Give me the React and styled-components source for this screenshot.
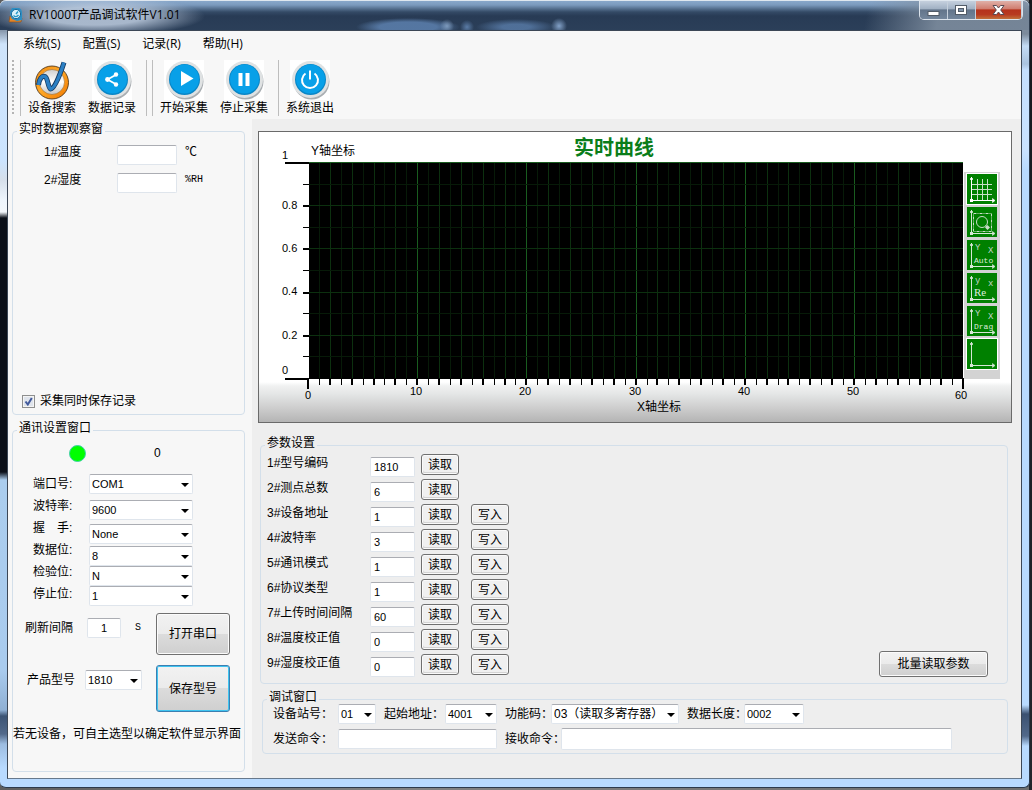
import React from 'react';
import styled, { createGlobalStyle, css } from 'styled-components';

const GlobalStyle = createGlobalStyle`
  *, *::before, *::after { box-sizing: border-box; }
  body {
    margin: 0;
    background: linear-gradient(90deg, #5e5e5e 0%, #828282 40%, #6e6e6e 100%);
    font: 12px/14px "Liberation Sans", "Noto Sans CJK SC", sans-serif;
    color: #000;
  }
  button, input, select { font: inherit; color: inherit; margin: 0; }
`;

const uiFont = '"Open Sans", "Noto Sans CJK SC", sans-serif';

/* ---------- window frame ---------- */

const Desktop = styled.div`
  min-height: 100vh;
  display: flex;
  padding: 0 2px 2px 0;
  background: linear-gradient(#15181d, #22262c) right / 3px 100% no-repeat;
`;

const Window = styled.div`
  flex: 1;
  min-width: 0;
  display: flex;
  flex-direction: column;
  border: solid #2c3a4c;
  border-width: 0 1px 1px 0;
  border-radius: 6px;
  background:
    linear-gradient(
      #76869a 0, #8494a8 30px, #cfe4fb 44px, #cbe4ff 160px, #d6dfea 180px, #eef5fc 200px,
      #f3f7fb 212px, #0b0f18 218px, #0b0f18 472px, #abcdee 480px, #a9cbee 670px,
      #8fb0d4 710px, #3c5474 716px, #52698a 734px, #9cbce0 744px, #b8daff 768px
    ) left / 8px 100% no-repeat,
    linear-gradient(
      #8b98a8 0, #7c8a9b 34px, #c4dcf6 46px, #a9c3e0 64px, #c4dfff 70px, #c9e2ff 150px,
      #b8daff 170px, #b8daff 705px, #3b5171 714px, #52698a 736px, #b8daff 746px
    ) right / 10px 100% no-repeat,
    #b8daff;
`;

const TitleBar = styled.header`
  height: 30px;
  display: flex;
  align-items: flex-start;
  padding-left: 8px;
  border-top: 1px solid #dfe7ef;
  border-radius: 6px 6px 0 0;
  background:
    radial-gradient(ellipse 110px 20px at 95px 15px, rgba(190, 205, 224, 0.85) 45%, rgba(150, 172, 200, 0) 100%),
    radial-gradient(circle 7px at 447px 25px, rgba(150, 180, 215, 0.7), rgba(90, 120, 160, 0)),
    radial-gradient(circle 7px at 467px 26px, rgba(102, 139, 186, 0.8), rgba(90, 120, 160, 0)),
    radial-gradient(circle 8px at 559px 25px, rgba(140, 172, 212, 0.9), rgba(90, 120, 160, 0)),
    radial-gradient(ellipse 52px 9px at 408px 26px, rgba(92, 128, 174, 0.85) 55%, rgba(90, 120, 160, 0) 100%),
    radial-gradient(ellipse 40px 8px at 516px 26px, rgba(92, 128, 174, 0.75) 35%, rgba(90, 120, 160, 0) 100%),
    linear-gradient(100deg, rgba(130, 145, 162, 0) 84%, rgba(130, 145, 162, 0.85) 91%),
    linear-gradient(#88a7ca 0, #7b9abd 4px, #344a66 11px, #283b55 15px, #2b3f59 100%);
`;

const Title = styled.h1`
  flex: 1;
  display: flex;
  align-items: center;
  gap: 5px;
  height: 28px;
  margin: 0;
  font: 12px/16px ${uiFont};
`;

const Caption = styled.div`
  display: flex;
  margin-right: 6px;
  border: 1px solid #dbe3ec;
  border-top: 0;
  border-radius: 0 0 5px 5px;
  overflow: hidden;
`;

const CaptionButton = styled.button`
  width: ${(p) => (p.$close ? 46 : 28)}px;
  height: 18px;
  display: flex;
  justify-content: center;
  align-items: center;
  padding: 0;
  border: 0;
  border-right: 1px solid #c6d0dc;
  background: ${(p) =>
    p.$close
      ? 'linear-gradient(#e0b0a8 0, #cf7a6c 46%, #b5321c 48%, #b83a20 75%, #c1703a 100%)'
      : 'linear-gradient(#c5d0de 0, #9fafc2 46%, #62748a 48%, #73869c 100%)'};
`;

const Client = styled.div`
  flex: 1;
  display: flex;
  flex-direction: column;
  margin: 0 7px 8px 7px;
  border: 1px solid #3c4756;
  border-bottom-color: #66788c;
  background: #f7f7f7;
`;

/* ---------- menu and toolbar ---------- */

const MenuBar = styled.nav`
  display: flex;
  gap: 22px;
  padding: 5px 15px;
  font: 12px/16px ${uiFont};
`;

const MenuLink = styled.a`
  color: #000;
  text-decoration: none;
`;

const ToolBar = styled.div`
  display: flex;
  height: 62px;
  padding: 3px 4px;
`;

const Grip = styled.span`
  width: 2px;
  margin-right: 6px;
  background: repeating-linear-gradient(#b4b4b4 0 2px, transparent 2px 4px);
`;

const Separator = styled.span`
  width: 1px;
  margin-right: ${(p) => p.$after || 1}px;
  margin-left: ${(p) => p.$before || 0}px;
  background: #bdbdbd;
`;

const ToolButton = styled.button`
  width: 60px;
  display: flex;
  flex-direction: column;
  align-items: center;
  padding: 0;
  border: 0;
  background: none;
  font: 12px/16px ${uiFont};
`;

/* ---------- shared form parts ---------- */

const Group = styled.fieldset`
  min-width: 0;
  margin: 0 0 0 ${(p) => p.$indent || 0}px;
  padding: 0;
  display: flex;
  flex-direction: column;
  border: 1px solid #d3dfea;
  border-radius: 4px;
  ${(p) => p.$grow && css`flex: 1;`}
`;

const Legend = styled.legend`
  height: 18px;
  margin-left: 4px;
  padding: 0 2px;
  line-height: 14px;
`;

const Label = styled.label`
  white-space: nowrap;
`;

const TextBox = styled.input`
  width: ${(p) => p.$width}px;
  height: 20px;
  padding: 0 3px;
  border: 1px solid #dfe5ec;
  border-top-color: #abadb3;
  border-radius: 2px;
  background: #fff;
  font-size: 11px;
  text-align: ${(p) => (p.$center ? 'center' : 'left')};
  ${(p) => p.$fill && css`flex: 1; min-width: 0; height: 22px;`}
`;

const SelectWrap = styled.span`
  position: relative;
  display: block;
  width: ${(p) => p.$width}px;
  height: 20px;
  &::after {
    content: '';
    position: absolute;
    right: 4px;
    top: 9px;
    border: 4px solid transparent;
    border-top-color: #000;
    border-bottom: 0;
    pointer-events: none;
  }
`;

const SelectBox = styled.select`
  appearance: none;
  width: 100%;
  height: 100%;
  padding: 0 0 1px 2px;
  border: 1px solid #dfe5ec;
  border-top-color: #abadb3;
  border-radius: 2px;
  background: #fff;
  font-size: ${(p) => (p.$wide ? 12 : 11)}px;
`;

const PushButton = styled.button`
  width: ${(p) => p.$width}px;
  height: ${(p) => p.$height}px;
  padding: 0;
  border: 1px solid ${(p) => (p.$active ? '#3c7fb1' : '#707070')};
  border-radius: 3px;
  background: linear-gradient(#f2f2f2, #ebebeb 49%, #dcdcdc 50%, #cfcfcf);
  box-shadow: inset 0 0 0 1px ${(p) => (p.$active ? '#3fc4f0' : '#fbfbfb')};
`;

const MiniButton = styled.button`
  width: 38px;
  height: 21px;
  padding: 0;
  border: 1px solid #707070;
  border-radius: 3px;
  background: #f0f0f0;
  box-shadow: inset 0 0 0 1px #fafafa, inset 1px -2px 0 #d4d4d4;
  line-height: 16px;
`;

function Select({ id, width, value, label, wide }) {
  return (
    <SelectWrap $width={width}>
      <SelectBox id={id} aria-label={label} defaultValue={value} $wide={wide}>
        <option>{value}</option>
      </SelectBox>
    </SelectWrap>
  );
}

/* ---------- page columns ---------- */

const Body = styled.main`
  flex: 1;
  display: flex;
`;

const Sidebar = styled.aside`
  width: 244px;
  display: flex;
  flex-direction: column;
  gap: 6px;
  padding: 3px 7px 6px 4px;
`;

const Content = styled.div`
  flex: 1;
  min-width: 0;
  padding: 12px 9px 0 6px;
  background: #eee;
`;

/* ---------- sidebar ---------- */

const Readings = styled.div`
  flex: 1;
  display: flex;
  flex-direction: column;
  gap: 8px;
  padding: 5px 0 0 31px;
`;

const ReadingRow = styled.div`
  display: grid;
  grid-template-columns: 73px 68px auto;
  align-items: start;
`;

const Unit = styled.span`
  font-family: ${(p) => (p.$narrow ? '"Liberation Mono"' : '"Liberation Serif"')}, "Noto Sans CJK SC", serif;
  font-size: ${(p) => (p.$narrow ? 10 : 12)}px;
`;

const CheckRow = styled.label`
  display: flex;
  align-items: center;
  gap: 5px;
  padding: 0 0 6px 9px;
`;

const CheckBox = styled.input`
  appearance: none;
  width: 13px;
  height: 13px;
  border: 1px solid #8e8f8f;
  background: #e4e8ee;
  box-shadow: inset 0 0 0 1px #f4f4f4;
  &:checked {
    background: #dfe4ec
      url("data:image/svg+xml,%3Csvg xmlns='http://www.w3.org/2000/svg' viewBox='0 0 11 11'%3E%3Cpath d='M2.5 5.5L4.8 8.5L8.8 2' fill='none' stroke='%23425a9c' stroke-width='2'/%3E%3C/svg%3E");
  }
`;

const StatusRow = styled.div`
  display: flex;
  align-items: center;
  gap: 68px;
  height: 28px;
  padding-left: 56px;
`;

const Lamp = styled.span`
  width: 17px;
  height: 17px;
  border: 1px solid #3fd0a8;
  border-radius: 50%;
  background: #0f0;
`;

const PortGrid = styled.div`
  display: flex;
  padding: 6px 0 0 20px;
`;

const PortLabels = styled.div`
  width: 56px;
  display: grid;
  grid-auto-rows: 22px;
  line-height: 22px;
`;

const PortFields = styled.div`
  display: grid;
  grid-template-rows: 26px 24px 22px 20px 20px 18px;
  padding-top: 1px;
`;

const ActionRow = styled.div`
  display: flex;
  justify-content: space-between;
  padding: 8px 14px 2px 12px;
`;

const ActionField = styled.div`
  display: flex;
  align-items: center;
  align-self: flex-start;
  gap: ${(p) => p.$gap}px;
  padding: 5px 0 0 ${(p) => p.$indent || 0}px;
`;

const Hint = styled.p`
  margin: 0;
  padding: 13px 0 30px;
  white-space: nowrap;
`;

/* ---------- chart ---------- */

const ChartPanel = styled.section`
  display: flex;
  align-items: flex-start;
  padding-right: 11px;
  border: 1px solid #6a6a6a;
  background: linear-gradient(#fff 250px, #f0f1f1 254px, #e4e6e6 262px, #cfcfcf 275px, #b4b4b4 290px);
`;

const ChartSvg = styled.svg`
  flex: 1;
  min-width: 0;
  display: block;
  overflow: visible;
`;

const ChartTools = styled.div`
  width: 36px;
  height: 207px;
  display: flex;
  flex-direction: column;
  align-items: center;
  gap: 3px;
  margin-top: 40px;
  padding-top: 2px;
  background: #d3d3d3;
`;

const ChartTool = styled.button`
  width: 30px;
  height: 30px;
  padding: 0;
  border: 0;
  outline: ${(p) => (p.$raised ? '1px solid #fff' : 'none')};
  background: #008000;
`;

const X0 = 49;
const STEP_X = 109.2 / 10;
const Y0 = 30.5;
const STEP_Y = 21.6;

function Chart() {
  const cols = Array.from({ length: 61 }, (_, i) => i);
  const rows = Array.from({ length: 11 }, (_, i) => i);
  const x = (i) => Math.round(X0 + i * STEP_X);
  const y = (i) => Math.round(Y0 + i * STEP_Y - 0.5);
  return (
    <ChartSvg viewBox="0 0 705 290" role="img" aria-label="实时曲线">
      <rect x="50" y="30" width="654" height="217" fill="#000" />
      <g shapeRendering="crispEdges">
        {cols.slice(1, 60).map((i) => (
          <rect key={i} x={x(i)} y="30" width="1" height="216"
            fill={i % 10 === 0 ? '#195c1f' : i % 2 === 0 ? '#0c300f' : '#071a08'} />
        ))}
        {rows.slice(0, 10).map((i) => (
          <rect key={i} x="50" y={y(i)} width="654" height="1"
            fill={i === 0 ? '#195c1f' : i % 2 === 0 ? '#0c300f' : '#071a08'} />
        ))}
        {rows.map((i) => {
          const end = i === 0 || i === 10;
          return (
            <rect key={i} x={end ? 26 : 44} y={y(i)} width={end ? 24 : 6}
              height={i % 2 === 0 ? 2 : 1} fill="#000" />
          );
        })}
        {cols.map((i) => (
          <rect key={i} x={x(i) - (i % 2 === 0 ? 1 : 0)} y="246" width={i % 2 === 0 ? 2 : 1}
            height={i === 0 || i === 60 ? 11 : 7} fill="#000" />
        ))}
      </g>
      <g fontSize="11">
        <text x="23" y="27">1</text>
        <text x="23" y="77">0.8</text>
        <text x="23" y="120">0.6</text>
        <text x="23" y="163">0.4</text>
        <text x="23" y="207">0.2</text>
        <text x="23" y="242">0</text>
        <text x="49" y="267" textAnchor="middle">0</text>
        {[10, 20, 30, 40, 50].map((n) => (
          <text key={n} x={x(n) - 1} y="263" textAnchor="middle">{n}</text>
        ))}
        <text x="702" y="267" textAnchor="middle">60</text>
      </g>
      <text x="52" y="23" fontSize="12">Y轴坐标</text>
      <text x="400" y="279" fontSize="12" textAnchor="middle">X轴坐标</text>
      <text x="355" y="23" fontSize="20" fontWeight="600" fill="#0a7d1a" textAnchor="middle">实时曲线</text>
    </ChartSvg>
  );
}

const toolKinds = [
  { kind: 'grid', name: '网格', raised: true },
  { kind: 'zoom', name: '缩放' },
  { kind: 'Auto', name: '自动' },
  { kind: 'Re', name: '还原' },
  { kind: 'Drag', name: '拖动' },
  { kind: 'axes', name: '坐标轴', raised: true },
];

function AxisIcon({ kind }) {
  const c = kind === 'grid' ? '#fff' : '#d6e6d6';
  const wordFont = kind === 'Re' ? 'Liberation Serif, serif' : 'Liberation Mono, monospace';
  return (
    <svg width="30" height="30" viewBox="0 0 30 30" aria-hidden="true" display="block">
      <path d="M4.5 3V26.5H27" fill="none" stroke={c} />
      <path d="M3 5L4.500 3.500L6 5L4.500 6.500ZM25.500 24.500L28 26.500L25.500 28.500Z" fill={c} stroke={c} strokeWidth="0.6" />
      <rect x="3" y="25" width="3" height="3" fill={c} />
      {kind === 'grid' && (
        <path d="M10.5 5V26M15.5 5V26M20.5 5V26M5 10.5H25M5 15.5H25M5 20.5H25" stroke="#c8e0c8" fill="none" />
      )}
      {kind === 'zoom' && (
        <g fill="none" stroke="#c8dcc8">
          <rect x="6.5" y="6.5" width="18" height="18" strokeDasharray="3 1 1 1" />
          <circle cx="15" cy="15" r="5.5" />
          <path d="M18.500 18.500L20 20" />
          <path d="M20.500 18L23 20.500L20.500 23L18 20.500Z" fill="#c8dcc8" stroke="none" />
        </g>
      )}
      {['Auto', 'Re', 'Drag'].includes(kind) && (
        <g fontFamily="Liberation Mono, monospace" fill="#c2d4ca">
          <text x="8" y="10" fontSize="9">{kind === 'Re' ? 'y' : 'Y'}</text>
          <text x="21" y="13" fontSize="9">{kind === 'Re' ? 'x' : 'X'}</text>
          <text x="7" y="23" fontSize={kind === 'Re' ? 11 : 8} fill="#dcebdc" fontFamily={wordFont}>{kind}</text>
        </g>
      )}
    </svg>
  );
}

/* ---------- parameters and debugging ---------- */

const Stack = styled.div`
  display: flex;
  flex-direction: column;
  gap: 6px;
  padding: 13px 4px 0 2px;
`;

const ParamsBody = styled.div`
  display: flex;
  justify-content: space-between;
  align-items: flex-end;
  padding: 0 19px 6px 6px;
`;

const ParamList = styled.div`
  display: flex;
  flex-direction: column;
  gap: 2px;
`;

const ParamRow = styled.div`
  display: grid;
  grid-template-columns: 103px 51px 50px 38px;
  align-items: start;
  height: 23px;
  line-height: 18px;
  & > input { align-self: end; }
`;

const DebugBody = styled.div`
  display: flex;
  flex-direction: column;
  gap: 4px;
  margin-top: -4px;
  padding: 0 55px 3px 10px;
`;

const DebugRow = styled.div`
  display: flex;
  align-items: center;
`;

const DebugLabel = styled(Label)`
  width: ${(p) => p.$width}px;
  margin-left: ${(p) => (p.$first ? 0 : 8)}px;
`;

const params = [
  ['1#型号编码', '1810'],
  ['2#测点总数', '6'],
  ['3#设备地址', '1', true],
  ['4#波特率', '3', true],
  ['5#通讯模式', '1', true],
  ['6#协议类型', '1', true],
  ['7#上传时间间隔', '60', true],
  ['8#温度校正值', '0', true],
  ['9#湿度校正值', '0', true],
];

const portSettings = [
  ['port', '端口号:', 'COM1'],
  ['baud', '波特率:', '9600'],
  ['handshake', '握　手:', 'None'],
  ['databits', '数据位:', '8'],
  ['parity', '检验位:', 'N'],
  ['stopbits', '停止位:', '1'],
];

/* ---------- icons ---------- */

function AppIcon() {
  return (
    <svg width="16" height="16" viewBox="0 0 16 16" aria-hidden="true">
      <path d="M2 9L1 15H13L14 11Z" fill="#e0852c" stroke="#8c4a12" strokeWidth="0.6" />
      <path d="M4 1H11Q14 2 14 6V13L9 14L4 12Q2 9 2 5Z" fill="#2c8fc4" />
      <circle cx="8" cy="7" r="4.6" fill="#d8f1fa" stroke="#1b6c9c" />
      <path d="M8 7L10 4.5M5.5 8.5Q8 11 10.5 8" stroke="#2698c8" strokeWidth="1.4" fill="none" />
    </svg>
  );
}

function SearchLogo() {
  const mark = 'M6.500 25C7 19 10 15.500 13 16.500C16 18 15.500 26 18.500 29C22 29 27 18 32 2.500';
  return (
    <svg width="40" height="40" viewBox="0 0 40 40" aria-hidden="true">
      <defs>
        <linearGradient id="ring" x1="0" y1="0" x2="1" y2="1">
          <stop offset="0" stopColor="#f08a10" />
          <stop offset="0.45" stopColor="#ffa928" />
          <stop offset="1" stopColor="#f07800" />
        </linearGradient>
        <linearGradient id="face" x1="0" y1="0" x2="0" y2="1">
          <stop offset="0" stopColor="#cfcfcf" />
          <stop offset="0.5" stopColor="#fff" />
          <stop offset="1" stopColor="#c4c4c4" />
        </linearGradient>
      </defs>
      <circle cx="20" cy="22.500" r="16.500" fill="url(#ring)" stroke="#3d2a14" strokeWidth="0.8" />
      <circle cx="20" cy="22" r="12.500" fill="url(#face)" stroke="#a06a28" strokeWidth="0.6" />
      <path d={mark} fill="none" stroke="#16385f" strokeWidth="5" strokeLinejoin="round" />
      <path d={mark} fill="none" stroke="#2c80c4" strokeWidth="3.400" strokeLinejoin="round" />
    </svg>
  );
}

function RoundIcon({ children }) {
  return (
    <svg width="40" height="40" viewBox="0 0 40 40" aria-hidden="true">
      <rect width="40" height="40" fill="#fff" />
      <circle cx="21.500" cy="21.500" r="18" fill="#a9aeb2" />
      <circle cx="20.500" cy="19.500" r="18.500" fill="#dfe2e3" />
      <circle cx="20.500" cy="19.500" r="15.500" fill="#0a86c6" />
      <circle cx="20.500" cy="19" r="14.500" fill="#08a0e8" />
      {children}
    </svg>
  );
}

const ShareIcon = () => (
  <RoundIcon>
    <path d="M24.500 14.500L15.500 19.500L24.500 24.500" fill="none" stroke="#fff" strokeWidth="1.800" />
    <circle cx="24" cy="14.500" r="2.200" fill="#fff" />
    <circle cx="15.500" cy="19.500" r="2.400" fill="#fff" />
    <circle cx="24" cy="24.500" r="2.200" fill="#fff" />
  </RoundIcon>
);
const PlayIcon = () => (
  <RoundIcon><path d="M17 11L29.500 18.500L17 26Z" fill="#fff" /></RoundIcon>
);
const PauseIcon = () => (
  <RoundIcon><path d="M14.500 13H18.500V26H14.500ZM21.500 13H25.500V26H21.500Z" fill="#fff" /></RoundIcon>
);
const PowerIcon = () => (
  <RoundIcon>
    <path d="M15.500 13.500A8 8 0 1 0 24.500 13.500M20 10.500V19.500" fill="none" stroke="#fff" strokeWidth="2" />
  </RoundIcon>
);

export default function App() {
  return (
    <Desktop>
      <GlobalStyle />
      <Window>
        <TitleBar>
          <Title><AppIcon />RV1000T产品调试软件V1.01</Title>
          <Caption>
            <CaptionButton aria-label="最小化">
              <svg width="13" height="14"><rect x="1" y="8.5" width="11" height="4" fill="#fff" stroke="#525c68" /></svg>
            </CaptionButton>
            <CaptionButton aria-label="最大化">
              <svg width="13" height="12">
                <rect x="0.5" y="1.5" width="11" height="9" fill="#fff" stroke="#525c68" />
                <rect x="3.500" y="4.500" width="5" height="3" fill="#8094ab" stroke="#525c68" />
              </svg>
            </CaptionButton>
            <CaptionButton $close aria-label="关闭">
              <svg width="13" height="12" viewBox="0 0 13 12">
                <path d="M1 1.500H4.500L6.500 4L8.500 1.500H12L8.700 6L12 10.500H8.500L6.500 8L4.500 10.500H1L4.300 6Z" fill="#fff" stroke="#5a4a52" />
              </svg>
            </CaptionButton>
          </Caption>
        </TitleBar>

        <Client>
          <MenuBar>
            <MenuLink href="#system">系统(S)</MenuLink>
            <MenuLink href="#config">配置(S)</MenuLink>
            <MenuLink href="#record">记录(R)</MenuLink>
            <MenuLink href="#help">帮助(H)</MenuLink>
          </MenuBar>
          <ToolBar>
            <Grip />
            <Separator />
            <ToolButton><SearchLogo />设备搜索</ToolButton>
            <ToolButton><ShareIcon />数据记录</ToolButton>
            <Separator $before={4} $after={5} />
            <Separator />
            <ToolButton><PlayIcon />开始采集</ToolButton>
            <ToolButton><PauseIcon />停止采集</ToolButton>
            <Separator $before={4} />
            <ToolButton><PowerIcon />系统退出</ToolButton>
          </ToolBar>

          <Body>
            <Sidebar>
              <Group $grow>
                <Legend>实时数据观察窗</Legend>
                <Readings>
                  <ReadingRow>
                    <Label htmlFor="temp">1#温度</Label>
                    <TextBox id="temp" $width={60} />
                    <Unit>℃</Unit>
                  </ReadingRow>
                  <ReadingRow>
                    <Label htmlFor="hum">2#湿度</Label>
                    <TextBox id="hum" $width={60} />
                    <Unit $narrow>%RH</Unit>
                  </ReadingRow>
                </Readings>
                <CheckRow>
                  <CheckBox type="checkbox" defaultChecked />
                  采集同时保存记录
                </CheckRow>
              </Group>

              <Group>
                <Legend>通讯设置窗口</Legend>
                <StatusRow><Lamp /><span>0</span></StatusRow>
                <PortGrid>
                  <PortLabels>
                    {portSettings.map(([id, text]) => (
                      <Label key={id} htmlFor={id}>{text}</Label>
                    ))}
                  </PortLabels>
                  <PortFields>
                    {portSettings.map(([id, , value]) => (
                      <Select key={id} id={id} width={104} value={value} />
                    ))}
                  </PortFields>
                </PortGrid>
                <ActionRow>
                  <ActionField $gap={14}>
                    <Label htmlFor="interval">刷新间隔</Label>
                    <TextBox id="interval" $width={34} $center defaultValue="1" />
                    <Unit $narrow>S</Unit>
                  </ActionField>
                  <PushButton $width={74} $height={42}>打开串口</PushButton>
                </ActionRow>
                <ActionRow>
                  <ActionField $gap={10} $indent={2}>
                    <Label htmlFor="model">产品型号</Label>
                    <Select id="model" width={57} value="1810" />
                  </ActionField>
                  <PushButton $width={74} $height={47} $active>保存型号</PushButton>
                </ActionRow>
                <Hint>若无设备，可自主选型以确定软件显示界面</Hint>
              </Group>
            </Sidebar>

            <Content>
              <ChartPanel>
                <Chart />
                <ChartTools>
                  {toolKinds.map((t) => (
                    <ChartTool key={t.kind} $raised={t.raised} aria-label={t.name}>
                      <AxisIcon kind={t.kind} />
                    </ChartTool>
                  ))}
                </ChartTools>
              </ChartPanel>

              <Stack>
                <Group>
                  <Legend>参数设置</Legend>
                  <ParamsBody>
                    <ParamList>
                      {params.map(([name, value, writable], i) => (
                        <ParamRow key={name}>
                          <Label htmlFor={`param${i}`}>{name}</Label>
                          <TextBox id={`param${i}`} $width={45} defaultValue={value} />
                          <MiniButton>读取</MiniButton>
                          {writable && <MiniButton>写入</MiniButton>}
                        </ParamRow>
                      ))}
                    </ParamList>
                    <PushButton $width={109} $height={26}>批量读取参数</PushButton>
                  </ParamsBody>
                </Group>

                <Group $indent={2}>
                  <Legend>调试窗口</Legend>
                  <DebugBody>
                    <DebugRow>
                      <DebugLabel $first $width={65} htmlFor="station">设备站号：</DebugLabel>
                      <Select id="station" width={38} value="01" />
                      <DebugLabel $width={61} htmlFor="start">起始地址：</DebugLabel>
                      <Select id="start" width={52} value="4001" />
                      <DebugLabel $width={46} htmlFor="func">功能码：</DebugLabel>
                      <Select id="func" width={128} value="03（读取多寄存器）" wide />
                      <DebugLabel $width={57} htmlFor="length">数据长度：</DebugLabel>
                      <Select id="length" width={60} value="0002" />
                    </DebugRow>
                    <DebugRow>
                      <DebugLabel $first $width={65} htmlFor="send">发送命令：</DebugLabel>
                      <TextBox id="send" $width={159} />
                      <DebugLabel $width={56} htmlFor="recv">接收命令：</DebugLabel>
                      <TextBox id="recv" $fill />
                    </DebugRow>
                  </DebugBody>
                </Group>
              </Stack>
            </Content>
          </Body>
        </Client>
      </Window>
    </Desktop>
  );
}
